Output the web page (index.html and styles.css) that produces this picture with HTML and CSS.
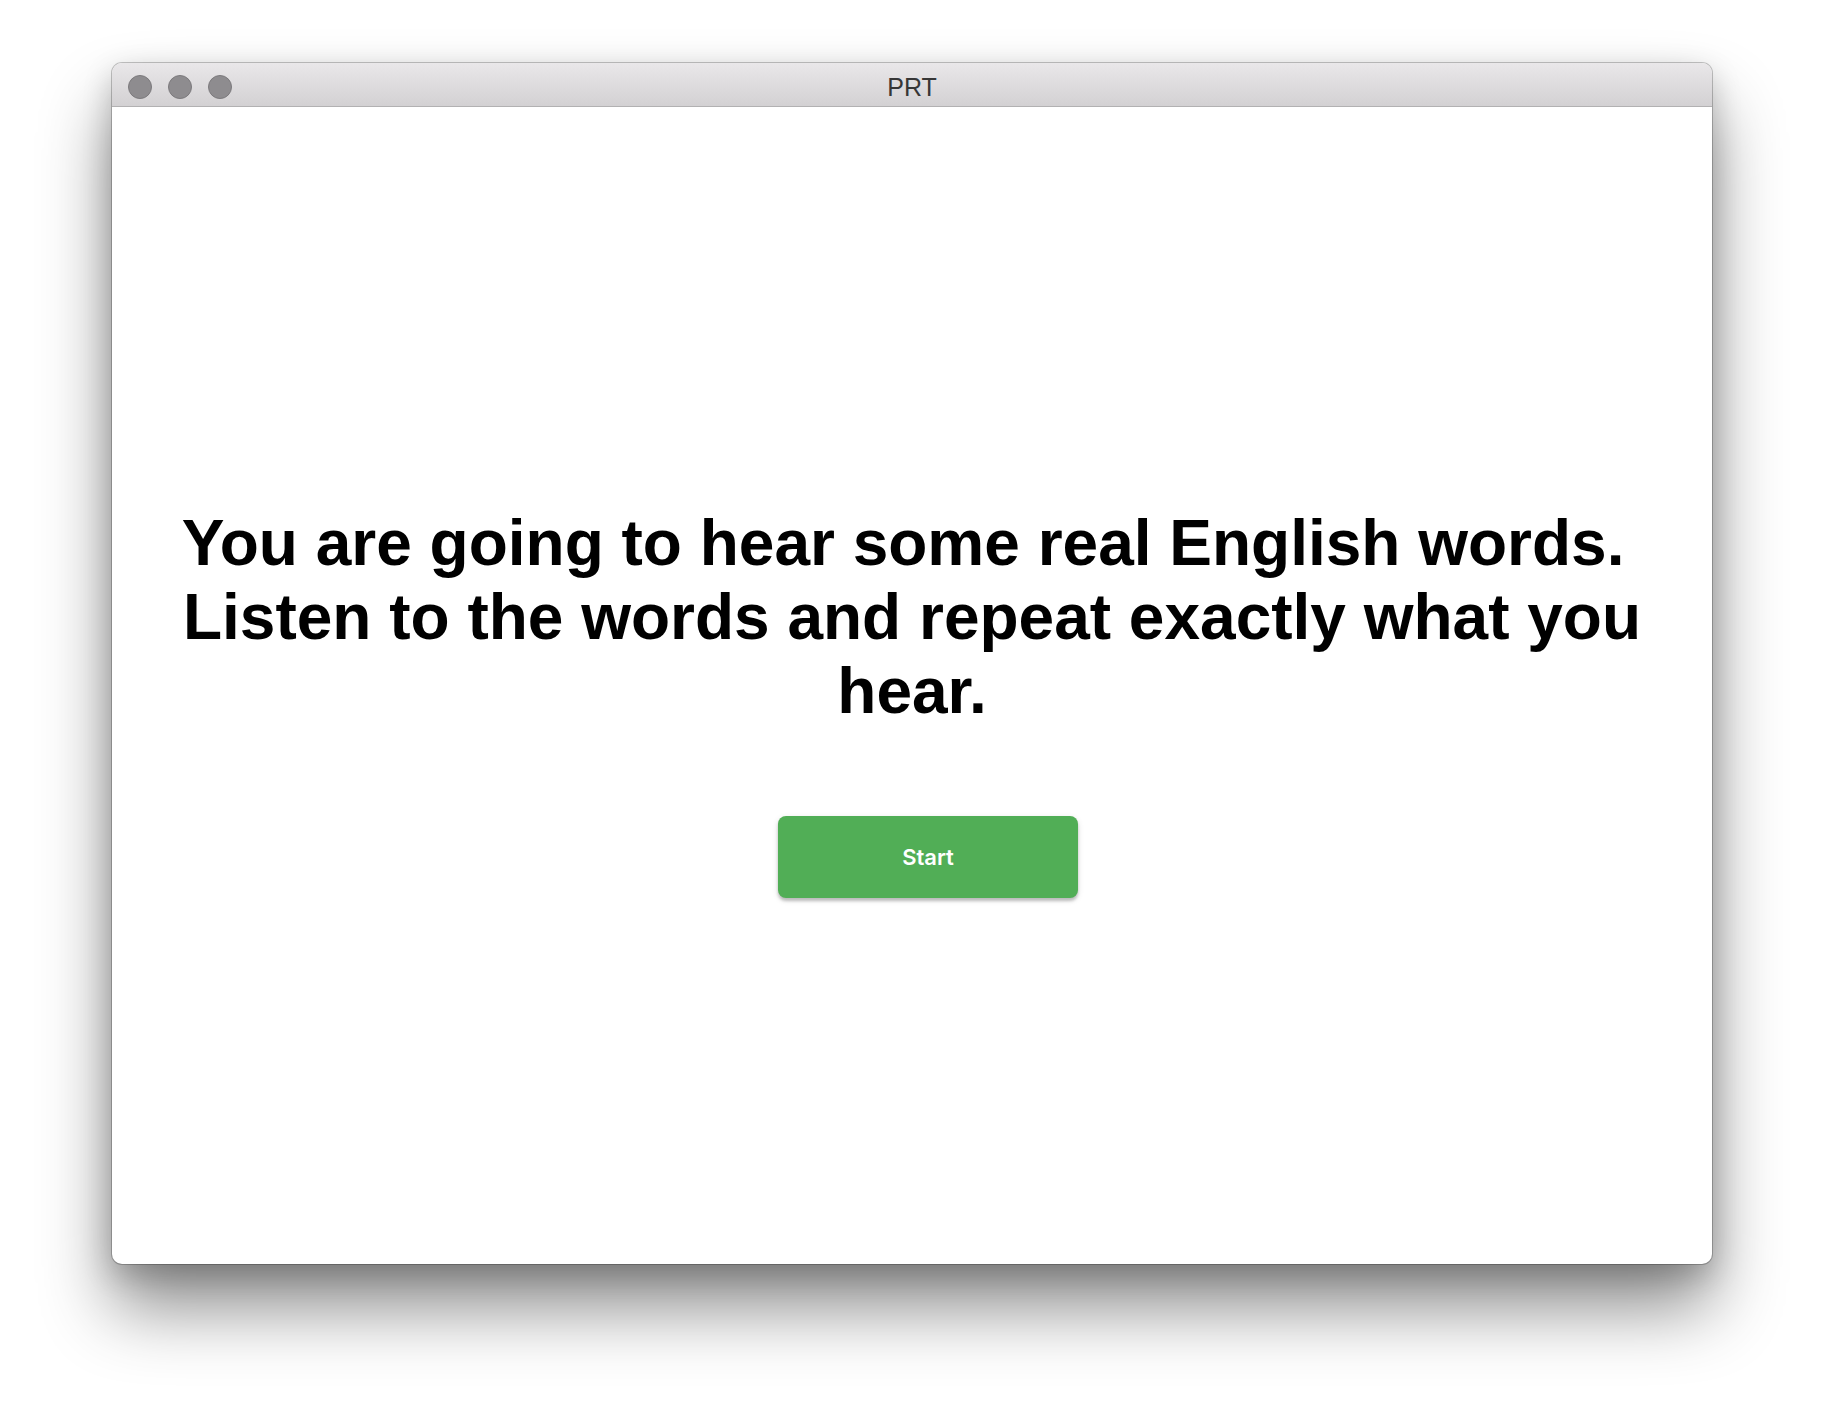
FILE: index.html
```html
<!DOCTYPE html>
<html>
<head>
<meta charset="utf-8">
<title>PRT</title>
<link rel="stylesheet" href="styles.css">
</head>
<body>
<div class="window">
  <div class="titlebar">
    <div class="lights">
      <span class="light"></span>
      <span class="light"></span>
      <span class="light"></span>
    </div>
    <div class="title">PRT</div>
  </div>
  <div class="content">
    <h1 class="prompt">You are going to hear some real English words.&nbsp;<br>Listen to the words and repeat exactly what you hear.</h1>
    <button class="start">Start</button>
  </div>
</div>
</body>
</html>
```

FILE: styles.css
```css
html, body {
  margin: 0;
  padding: 0;
  background: #ffffff;
}
body {
  width: 1824px;
  height: 1424px;
  overflow: hidden;
  padding-top: 63px;
  box-sizing: border-box;
}
.window {
  margin-left: 112px;
  width: 1600px;
  height: 1201px;
  border-radius: 10px;
  background: #ffffff;
  box-shadow: 0 0 0 1px rgba(0,0,0,0.22), 0 44px 70px rgba(0,0,0,0.45), 0 10px 30px rgba(0,0,0,0.2);
  display: flex;
  flex-direction: column;
  overflow: hidden;
}
.titlebar {
  height: 43px;
  flex: none;
  position: relative;
  background: linear-gradient(#e9e7e9, #d3d1d3);
  border-bottom: 1px solid #b2b1b2;
  display: flex;
  align-items: center;
  justify-content: center;
}
.lights {
  position: absolute;
  left: 16px;
  top: 12px;
  display: flex;
  gap: 16px;
}
.light {
  width: 22px;
  height: 22px;
  border-radius: 50%;
  background: #8e8c8f;
  border: 1px solid #7c7a7d;
}
.title {
  font-family: "Liberation Sans", Arial, sans-serif;
  font-size: 25px;
  color: #363636;
  padding-top: 5px;
}
.content {
  flex: 1;
  display: flex;
  flex-direction: column;
  align-items: center;
  padding-top: 399px;
}
.prompt {
  margin: 0;
  font-family: "Liberation Sans", Arial, sans-serif;
  font-weight: bold;
  font-size: 64px;
  color: #000000;
  text-align: center;
  width: 1600px;
}
.start {
  margin-top: 88px;
  margin-left: 32px;
  width: 300px;
  height: 82px;
  border: none;
  border-radius: 8px;
  background: #51ae56;
  color: #ffffff;
  font-family: Inter, "Noto Sans", sans-serif;
  font-weight: 600;
  font-size: 22px;
  box-shadow: 0 3px 3px rgba(0,0,0,0.2), 0 2px 6px rgba(0,0,0,0.12);
}
```
